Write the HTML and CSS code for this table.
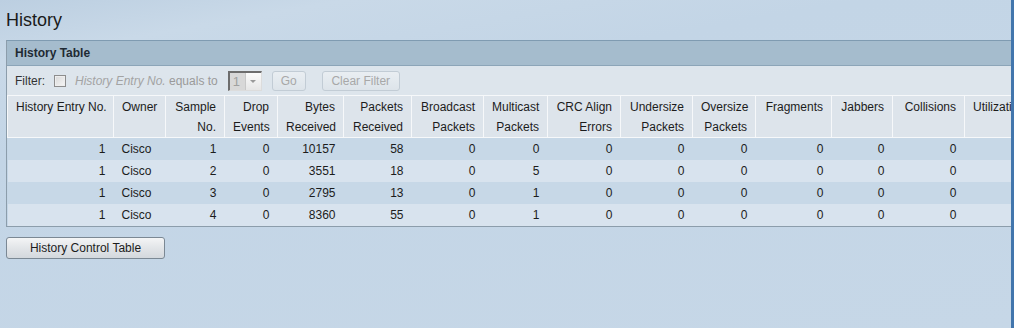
FILE: index.html
```html
<!DOCTYPE html>
<html>

<head>
    <meta charset="UTF-8">
    <meta name="viewport" content="width=device-width">
    <title>History</title>
    <link rel="stylesheet" href="styles.css">
</head>

<body>
    <div class="page">
        <h1 class="title">History</h1>

        <section class="panel">
            <div class="panel-head">History Table</div>

            <div class="filter">
                <span class="filter-label">Filter:</span>
                <span class="check"></span>
                <span class="hint"><i>History Entry No.</i> equals to</span>
                <span class="select">
                    <span class="select-val">1</span>
                    <span class="select-btn"></span>
                </span>
                <button class="btn-off btn-go">Go</button>
                <button class="btn-off btn-clear">Clear Filter</button>
            </div>

            <table class="grid">
                <colgroup>
                    <col style="width:106px">
                    <col style="width:52px">
                    <col style="width:59px">
                    <col style="width:53px">
                    <col style="width:66px">
                    <col style="width:68px">
                    <col style="width:72px">
                    <col style="width:64px">
                    <col style="width:73px">
                    <col style="width:72px">
                    <col style="width:63px">
                    <col style="width:76px">
                    <col style="width:61px">
                    <col style="width:72px">
                    <col style="width:80px">
                </colgroup>
                <thead>
                    <tr>
                        <th>History Entry No.</th>
                        <th>Owner</th>
                        <th>Sample<br>No.</th>
                        <th>Drop<br>Events</th>
                        <th>Bytes<br>Received</th>
                        <th>Packets<br>Received</th>
                        <th>Broadcast<br>Packets</th>
                        <th>Multicast<br>Packets</th>
                        <th>CRC Align<br>Errors</th>
                        <th>Undersize<br>Packets</th>
                        <th>Oversize<br>Packets</th>
                        <th>Fragments</th>
                        <th>Jabbers</th>
                        <th>Collisions</th>
                        <th class="th-left">Utilization</th>
                    </tr>
                </thead>
                <tbody>
                    <tr>
                        <td>1</td><td class="txt">Cisco</td><td>1</td><td>0</td><td>10157</td><td>58</td><td>0</td><td>0</td><td>0</td><td>0</td><td>0</td><td>0</td><td>0</td><td>0</td><td></td>
                    </tr>
                    <tr>
                        <td>1</td><td class="txt">Cisco</td><td>2</td><td>0</td><td>3551</td><td>18</td><td>0</td><td>5</td><td>0</td><td>0</td><td>0</td><td>0</td><td>0</td><td>0</td><td></td>
                    </tr>
                    <tr>
                        <td>1</td><td class="txt">Cisco</td><td>3</td><td>0</td><td>2795</td><td>13</td><td>0</td><td>1</td><td>0</td><td>0</td><td>0</td><td>0</td><td>0</td><td>0</td><td></td>
                    </tr>
                    <tr>
                        <td>1</td><td class="txt">Cisco</td><td>4</td><td>0</td><td>8360</td><td>55</td><td>0</td><td>1</td><td>0</td><td>0</td><td>0</td><td>0</td><td>0</td><td>0</td><td></td>
                    </tr>
                </tbody>
            </table>
        </section>

        <button class="btn-main">History Control Table</button>
    </div>
</body>

</html>
```

FILE: styles.css
```css
* {
    box-sizing: border-box;
}

html,
body {
    height: 100%;
}

body {
    margin: 0;
    overflow: hidden;
    font-family: "Liberation Sans", Arial, sans-serif;
    font-size: 12px;
    color: #1c1c1c;
    background: linear-gradient(170deg, #bccfe1 0%, #c9d9e8 12%, #c3d5e6 30%, #c6d7e7 100%);
    /* bord bleu du cadre à droite */
    border-right: 3px solid #4276ad;
}

.page {
    padding: 0 0 0 6px;
}

/*********************/
/* Titre */
/*********************/
.title {
    margin: 0;
    height: 40px;
    padding-top: 8px;
    font-size: 18px;
    font-weight: normal;
    line-height: 24px;
    color: #1a1a1a;
}

/*********************/
/* Le panneau */
/*********************/
.panel {
    overflow: hidden;
    border-left: 1px solid #8c9dab;
    border-bottom: 1px solid #8c9dab;
}

.panel-head {
    height: 26px;
    padding-left: 8px;
    line-height: 24px;
    font-weight: bold;
    color: #1f2a33;
    background: #a5bccd;
    border-top: 1px solid #7f9bb1;
    border-bottom: 1px solid #8ca5b8;
}

.filter {
    display: flex;
    align-items: center;
    height: 29px;
    padding-left: 8px;
    background: #dde5ec;
    color: #9a9a9a;
}

.filter-label {
    color: #333;
}

.check {
    width: 12px;
    height: 12px;
    margin: 0 9px 0 9px;
    border: 1px solid #8d8d8d;
    background: linear-gradient(135deg, #d8d8d8, #f6f6f6);
    box-shadow: inset 0 0 0 1px #eee;
}

.hint i {
    color: #a3a3a3;
}

.select {
    display: flex;
    width: 34px;
    height: 20px;
    margin-left: 10px;
    border-top: 2px solid #6d6d6d;
    border-left: 2px solid #6d6d6d;
    border-right: 1px solid #dcdcdc;
    border-bottom: 1px solid #dcdcdc;
    background: #e9ebed;
}

.select-val {
    width: 15px;
    padding-left: 3px;
    line-height: 17px;
    font-size: 13px;
    color: #a0a0a0;
    background: #d8d8d8;
}

.select-btn {
    flex: 1;
    position: relative;
    border-left: 1px solid #c8c8c8;
    background: linear-gradient(#fbfbfb, #e6e6e6);
}

.select-btn:after {
    content: '';
    position: absolute;
    left: 4px;
    top: 7px;
    border-left: 3px solid transparent;
    border-right: 3px solid transparent;
    border-top: 3px solid #9a9a9a;
}

.btn-off {
    height: 20px;
    padding: 0;
    font-family: inherit;
    font-size: 12px;
    color: #a8a8a8;
    background: linear-gradient(#e9eef2, #dde4ea);
    border: 1px solid #c2ccd5;
    border-radius: 3px;
}

.btn-go {
    width: 34px;
    margin-left: 10px;
}

.btn-clear {
    width: 78px;
    margin-left: 16px;
}

/*********************/
/* Le tableau */
/*********************/
.grid {
    table-layout: fixed;
    width: 1037px;
    border-collapse: collapse;
}

.grid th {
    height: 42px;
    padding: 1px 8px 0 8px;
    vertical-align: top;
    text-align: right;
    font-weight: normal;
    line-height: 20px;
    white-space: nowrap;
    color: #1c1c1c;
    background: #dde4eb;
    border: 1px solid #f6f8fa;
}

.grid th.th-left {
    text-align: left;
}

.grid td {
    height: 22px;
    padding: 0 8px;
    text-align: right;
    white-space: nowrap;
}

.grid td.txt {
    text-align: left;
}

.grid tbody tr:nth-child(odd) {
    background: #c7d8e7;
}

.grid tbody tr:nth-child(even) {
    background: #d8e3ee;
}

/*********************/
/* Bouton du bas */
/*********************/
.btn-main {
    display: block;
    width: 159px;
    height: 22px;
    margin-top: 10px;
    padding: 0;
    font-family: inherit;
    font-size: 12px;
    color: #1c1c1c;
    background: linear-gradient(#f4f5f6, #e2e5e8 50%, #d3d8dd);
    border: 1px solid #7b8894;
    border-radius: 3px;
}
```
